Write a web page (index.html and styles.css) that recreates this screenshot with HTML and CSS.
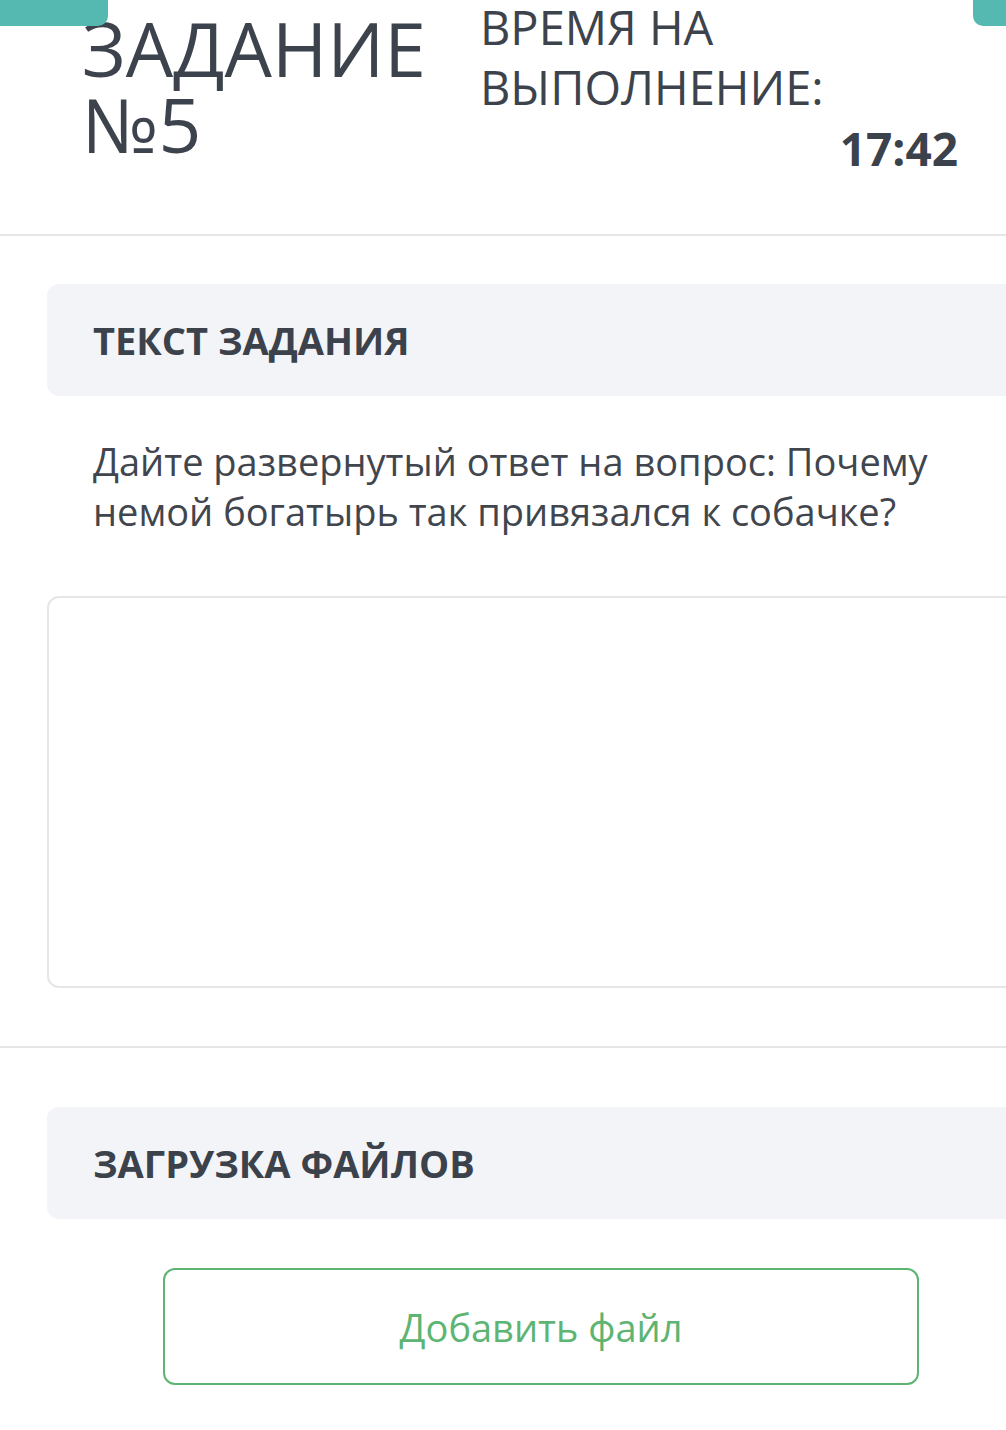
FILE: index.html
```html
<!DOCTYPE html>
<html lang="ru">
<head>
<meta charset="utf-8">
<title>Задание №5</title>
<link rel="stylesheet" href="styles.css">
</head>
<body>
<div class="page">
  <div class="corner corner-left"></div>
  <div class="corner corner-right"></div>
  <header class="head">
    <h1 class="title">ЗАДАНИЕ<br>№5</h1>
    <div class="timer">
      <div class="timer-label">ВРЕМЯ НА<br>ВЫПОЛНЕНИЕ:</div>
      <div class="timer-value">17:42</div>
    </div>
  </header>
  <hr class="divider">
  <section class="section">
    <div class="section-head">ТЕКСТ ЗАДАНИЯ</div>
    <p class="question">Дайте развернутый ответ на вопрос: Почему немой богатырь так привязался к собачке?</p>
    <div class="answer"></div>
  </section>
  <hr class="divider">
  <section class="section section-files">
    <div class="section-head">ЗАГРУЗКА ФАЙЛОВ</div>
    <div class="btn-row">
      <button class="add-file">Добавить файл</button>
    </div>
  </section>
</div>
</body>
</html>
```
FILE: styles.css
```css
html, body {
  margin: 0;
  padding: 0;
  background: #ffffff;
  overflow: hidden;
}
body {
  font-family: "Open Sans", "Noto Sans", sans-serif;
  color: #3c424b;
  width: 1006px;
  height: 1430px;
}
.page {
  position: relative;
  width: 1006px;
}
.corner {
  position: absolute;
  top: 0;
  height: 26px;
  background: #55b9b1;
  z-index: 2;
}
.corner-left {
  left: 0;
  width: 108px;
  border-bottom-right-radius: 10px;
}
.corner-right {
  left: 973px;
  width: 60px;
  border-bottom-left-radius: 10px;
}
.head {
  display: flex;
  padding: 0 48px 0 82px;
  height: 234px;
  box-sizing: border-box;
}
.title {
  margin: 10px 0 0 0;
  font-size: 75px;
  line-height: 76px;
  font-weight: 400;
  color: #3d434c;
  letter-spacing: 0;
  width: 398px;
  white-space: nowrap;
}
.timer {
  flex: 1;
  margin-top: -3px;
}
.timer-label {
  font-size: 47px;
  line-height: 60px;
  font-weight: 400;
  color: #3d434c;
  white-space: nowrap;
}
.timer-value {
  text-align: right;
  font-size: 46px;
  line-height: 62px;
  font-weight: 700;
  color: #3c424b;
}
.divider {
  margin: 0;
  border: 0;
  height: 2px;
  background: #e6e6e6;
}
.section {
  padding-left: 47px;
  margin-right: -40px;
}
.section-head {
  margin-top: 48px;
  height: 112px;
  box-sizing: border-box;
  background: #f3f4f7;
  border-radius: 12px;
  padding-left: 46px;
  display: flex;
  align-items: center;
  font-size: 38px;
  font-weight: 700;
  color: #3c424b;
}
.section-files .section-head {
  margin-top: 59px;
}
.question {
  margin: 40px 0 0 46px;
  width: 900px;
  font-size: 38px;
  line-height: 50px;
  font-weight: 400;
  color: #41464e;
}
.answer {
  margin-top: 60px;
  height: 392px;
  box-sizing: border-box;
  border: 2px solid #e6e6e6;
  border-radius: 12px;
  margin-bottom: 58px;
}
.btn-row {
  display: flex;
  padding: 49px 0 0 116px;
}
.add-file {
  width: 756px;
  height: 117px;
  background: #ffffff;
  border: 2px solid #5db473;
  border-radius: 12px;
  font-family: "Open Sans", "Noto Sans", sans-serif;
  font-size: 38px;
  color: #5db473;
  font-weight: 400;
  padding: 0;
}
```
